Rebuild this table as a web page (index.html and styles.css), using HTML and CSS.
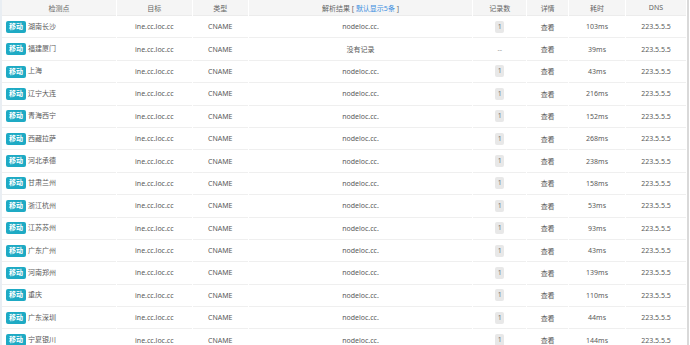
FILE: index.html
```html
<!DOCTYPE html>
<html lang="zh">
<head>
  <meta charset="UTF-8" />
  <meta name="viewport" content="width=device-width, initial-scale=1.0" />
  <title>DNS 检测</title>
  <link rel="stylesheet" href="styles.css">
</head>
<body>
  <div class="wrap">
    <table class="result">
      <colgroup>
        <col class="c-point"><col class="c-target"><col class="c-type"><col class="c-res">
        <col class="c-num"><col class="c-detail"><col class="c-time"><col class="c-dns">
      </colgroup>
      <thead>
        <tr>
          <th>检测点</th>
          <th>目标</th>
          <th>类型</th>
          <th>解析结果 [ <span class="link">默认显示5条</span> ]</th>
          <th>记录数</th>
          <th>详情</th>
          <th>耗时</th>
          <th>DNS</th>
        </tr>
      </thead>
      <tbody id="rows"></tbody>
    </table>
  </div>

  <script>
    const data = [
      ['湖南长沙', 'nodeloc.cc.', 1, '103ms'],
      ['福建厦门', '没有记录', 0, '39ms'],
      ['上海', 'nodeloc.cc.', 1, '43ms'],
      ['辽宁大连', 'nodeloc.cc.', 1, '216ms'],
      ['青海西宁', 'nodeloc.cc.', 1, '152ms'],
      ['西藏拉萨', 'nodeloc.cc.', 1, '268ms'],
      ['河北承德', 'nodeloc.cc.', 1, '238ms'],
      ['甘肃兰州', 'nodeloc.cc.', 1, '158ms'],
      ['浙江杭州', 'nodeloc.cc.', 1, '53ms'],
      ['江苏苏州', 'nodeloc.cc.', 1, '93ms'],
      ['广东广州', 'nodeloc.cc.', 1, '43ms'],
      ['河南郑州', 'nodeloc.cc.', 1, '139ms'],
      ['重庆', 'nodeloc.cc.', 1, '110ms'],
      ['广东深圳', 'nodeloc.cc.', 1, '44ms'],
      ['宁夏银川', 'nodeloc.cc.', 1, '144ms']
    ];

    const tbody = document.getElementById('rows');
    data.forEach(([city, result, count, time]) => {
      const tr = document.createElement('tr');
      tr.innerHTML =
        '<td class="point"><span class="isp">移动</span>' + city + '</td>' +
        '<td>ine.cc.loc.cc</td>' +
        '<td>CNAME</td>' +
        '<td>' + result + '</td>' +
        '<td>' + (count ? '<span class="count">' + count + '</span>' : '<span class="none">--</span>') + '</td>' +
        '<td>查看</td>' +
        '<td>' + time + '</td>' +
        '<td>223.5.5.5</td>';
      tbody.appendChild(tr);
    });
  </script>
</body>
</html>
```

FILE: styles.css
```css
* {
  box-sizing: border-box;
}

html, body {
  margin: 0;
  padding: 0;
  background: #fff;
  color: #5a5a5a;
  font-family: 'Noto Sans', 'Noto Sans CJK SC', sans-serif;
  overflow: hidden;
}

.wrap {
  width: 689px;
  border-left: 2px solid #e9eef3;
  border-right: 2px solid #d9d9d9;
  height: 345px;
  overflow: hidden;
}

.result {
  table-layout: fixed;
  border-collapse: separate;
  border-spacing: 1px 0;
  margin-left: -1px;
  font-size: 7px;
}

.c-point { width: 114px; }
.c-target { width: 75px; }
.c-type { width: 55px; }
.c-res { width: 224px; }
.c-num { width: 53px; }
.c-detail { width: 41px; }
.c-time { width: 56px; }
.c-dns { width: 60px; }

.result th {
  height: 16px;
  padding: 0;
  background: #f5f5f5;
  color: #666;
  font-weight: normal;
  text-align: center;
  border-bottom: 1px solid #ececec;
}

.link {
  color: #3d8fe0;
}

.result td {
  height: 22.4px;
  padding: 0;
  text-align: center;
  border-bottom: 1px solid #efefef;
  white-space: nowrap;
  overflow: hidden;
}

.result td.point {
  text-align: left;
  padding-left: 4px;
}

.isp {
  display: inline-block;
  width: 20px;
  height: 12px;
  line-height: 12px;
  margin-right: 2px;
  border-radius: 2px;
  background: #1eaac4;
  color: #fff;
  font-weight: bold;
  text-align: center;
  vertical-align: middle;
}

.count {
  display: inline-block;
  width: 9px;
  height: 12px;
  line-height: 12px;
  border-radius: 2px;
  background: #e8e8e8;
  color: #777;
  vertical-align: middle;
}

.none {
  color: #999;
}
```
